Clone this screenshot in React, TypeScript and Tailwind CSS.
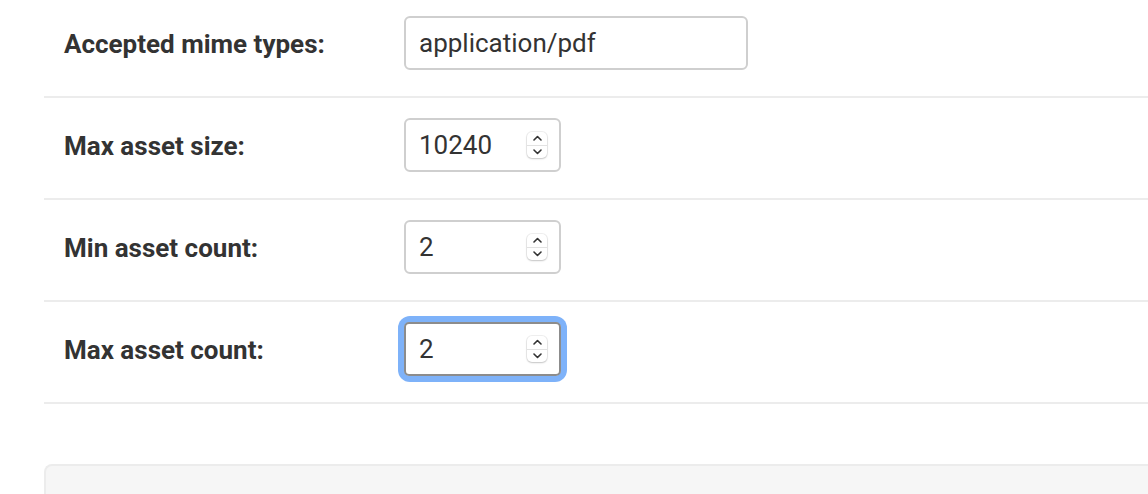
import { useState } from "react";

type Field = {
  label: string;
  value: string;
  type: "text" | "number";
  focused?: boolean;
};

const fields: Field[] = [
  { label: "Accepted mime types:", value: "application/pdf", type: "text" },
  { label: "Max asset size:", value: "10240", type: "number" },
  { label: "Min asset count:", value: "2", type: "number" },
  { label: "Max asset count:", value: "2", type: "number", focused: true },
];

function Spinner() {
  return (
    <div className="pointer-events-none absolute right-[14px] top-1/2 flex h-[26px] w-[20px] -translate-y-1/2 flex-col overflow-hidden rounded-[5px] bg-white shadow-[0_0_0_1px_rgba(0,0,0,0.06),0_1px_2px_rgba(0,0,0,0.18)]">
      <div className="flex flex-1 items-center justify-center border-b border-[#e2e2e2]">
        <svg width="9" height="6" viewBox="0 0 9 6" fill="none">
          <path d="M1 5L4.5 1.5L8 5" stroke="#333" strokeWidth="1.6" strokeLinecap="round" strokeLinejoin="round" />
        </svg>
      </div>
      <div className="flex flex-1 items-center justify-center">
        <svg width="9" height="6" viewBox="0 0 9 6" fill="none">
          <path d="M1 1L4.5 4.5L8 1" stroke="#333" strokeWidth="1.6" strokeLinecap="round" strokeLinejoin="round" />
        </svg>
      </div>
    </div>
  );
}

function FieldRow({ field }: { field: Field }) {
  const [value, setValue] = useState(field.value);
  const isNumber = field.type === "number";

  return (
    <div className="flex items-start border-b-2 border-[#ececec] pb-[26px] pt-[20px]">
      <label className="flex h-[54px] w-[360px] shrink-0 items-center pl-[20px] pt-[2px] text-[26px] font-bold text-[#333]">
        {field.label}
      </label>
      <div
        className={
          field.focused
            ? "relative w-[157px] rounded-[6px] shadow-[0_0_0_6px_#7eb2f9]"
            : isNumber
              ? "relative w-[157px]"
              : "relative w-[344px]"
        }
      >
        <input
          type="text"
          value={value}
          onChange={(event) => setValue(event.target.value)}
          className={
            field.focused
              ? "h-[54px] w-full rounded-[5px] border-2 border-[#8c8c8c] bg-white px-[13px] text-[26px] text-[#333] outline-none"
              : "h-[54px] w-full rounded-[6px] border-2 border-[#cfcfcf] bg-white px-[13px] text-[26px] text-[#333] outline-none"
          }
        />
        {isNumber ? <Spinner /> : null}
      </div>
    </div>
  );
}

export default function App() {
  return (
    <main className="min-h-screen overflow-hidden bg-white font-['Roboto',sans-serif]">
      <div className="-mt-[4px] ml-[44px]">
        {fields.map((field) => (
          <FieldRow key={field.label} field={field} />
        ))}
        <div className="mt-[60px] h-[60px] rounded-tl-[8px] border-l-2 border-t-2 border-[#ececec] bg-[#f6f6f6]" />
      </div>
    </main>
  );
}
